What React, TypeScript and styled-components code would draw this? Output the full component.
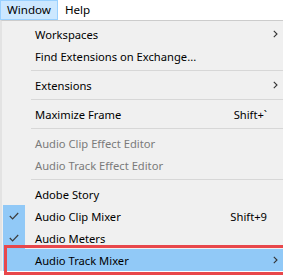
import styled, { createGlobalStyle } from "styled-components";

const GlobalStyle = createGlobalStyle`
  html, body {
    margin: 0;
    padding: 0;
    background: #ffffff;
  }
  body {
    font-family: "Segoe UI", "Noto Sans", sans-serif;
    font-size: 11.2px;
    color: #000000;
  }
`;

interface Item {
  label?: string;
  shortcut?: string;
  submenu?: boolean;
  disabled?: boolean;
  checked?: boolean;
  active?: boolean;
  separator?: boolean;
}

const items: Item[] = [
  { label: "Workspaces", submenu: true },
  { label: "Find Extensions on Exchange..." },
  { separator: true },
  { label: "Extensions", submenu: true },
  { separator: true },
  { label: "Maximize Frame", shortcut: "Shift+`" },
  { separator: true },
  { label: "Audio Clip Effect Editor", disabled: true },
  { label: "Audio Track Effect Editor", disabled: true },
  { separator: true },
  { label: "Adobe Story" },
  { label: "Audio Clip Mixer", shortcut: "Shift+9", checked: true },
  { label: "Audio Meters", checked: true },
  { label: "Audio Track Mixer", submenu: true, active: true },
];

const Chevron = () => (
  <svg width="5" height="8" viewBox="0 0 5 8">
    <polyline points="0.8,0.8 4,4 0.8,7.2" fill="none" stroke="#333" strokeWidth="1.1" />
  </svg>
);

const Check = () => (
  <svg width="10" height="8" viewBox="0 0 10 8">
    <polyline points="0.8,4 3.6,6.8 9.2,1" fill="none" stroke="#3c3c3c" strokeWidth="1.2" />
  </svg>
);

export default function App() {
  return (
    <>
      <GlobalStyle />
      <Page>
        <MenuBar>
          <BarItem $open>Window</BarItem>
          <BarItem>Help</BarItem>
        </MenuBar>
        <Dropdown>
          {items.map((item, i) =>
            item.separator ? (
              <Separator key={i} />
            ) : (
              <Row key={i} $active={item.active} $disabled={item.disabled}>
                <IconCell $checked={item.checked}>{item.checked && <Check />}</IconCell>
                <Label>{item.label}</Label>
                <Shortcut>{item.shortcut}</Shortcut>
                <Arrow>{item.submenu && <Chevron />}</Arrow>
                {item.active && <Callout />}
              </Row>
            )
          )}
        </Dropdown>
      </Page>
    </>
  );
}

const Page = styled.div`
  width: 283px;
  height: 275px;
  overflow: hidden;
  background: #ffffff;
`;

const MenuBar = styled.div`
  display: flex;
  height: 20px;
  background: #ffffff;
`;

const BarItem = styled.div<{ $open?: boolean }>`
  display: flex;
  align-items: center;
  box-sizing: border-box;
  height: 20px;
  padding: 0 6px 1px 6px;
  font-size: 11.6px;
  background: ${({ $open }) => ($open ? "#cce8ff" : "transparent")};
  border: 1px solid ${({ $open }) => ($open ? "#99d1ff" : "transparent")};
`;

const Dropdown = styled.div`
  display: flex;
  flex-direction: column;
  background: #f0f0f0;
  border-top: 1px solid #cccccc;
  border-left: 2px solid #e3e3e3;
  padding: 2px 0 0 1px;
`;

const Row = styled.div<{ $active?: boolean; $disabled?: boolean }>`
  position: relative;
  display: grid;
  grid-template-columns: 22px 1fr auto 16px;
  align-items: center;
  height: 22px;
  color: ${({ $disabled }) => ($disabled ? "#7a7a7a" : "#000000")};
  background: ${({ $active }) => ($active ? "#91c9f7" : "transparent")};
`;

const IconCell = styled.div<{ $checked?: boolean }>`
  display: flex;
  align-items: center;
  justify-content: center;
  height: 22px;
  background: ${({ $checked }) => ($checked ? "#91c9f7" : "transparent")};
`;

const Label = styled.span`
  padding-left: 10px;
  white-space: nowrap;
`;

const Shortcut = styled.span`
  white-space: nowrap;
`;

const Arrow = styled.div`
  display: flex;
  align-items: center;
  justify-content: center;
`;

const Callout = styled.div`
  position: absolute;
  left: 1px;
  right: -3px;
  top: -4px;
  bottom: -4px;
  border: 3px solid #e8474b;
  pointer-events: none;
`;

const Separator = styled.div`
  height: 7px;
  display: flex;
  align-items: center;
  padding-left: 28px;

  &::after {
    content: "";
    flex: 1;
    height: 1px;
    background: #d7d7d7;
  }
`;
